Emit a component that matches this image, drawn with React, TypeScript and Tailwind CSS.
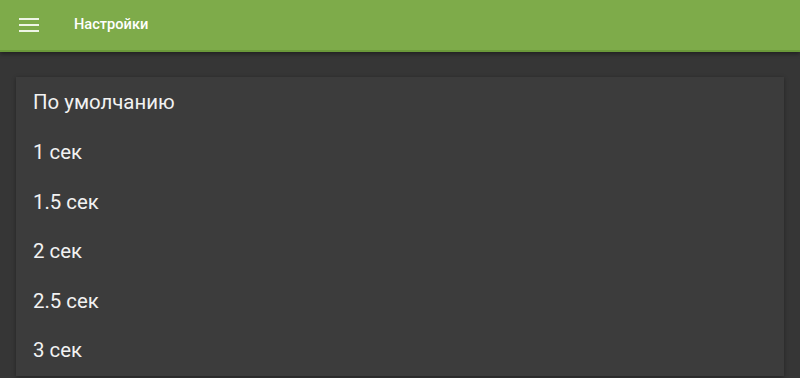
import React from "react";

const items = ["По умолчанию", "1 сек", "1.5 сек", "2 сек", "2.5 сек", "3 сек"];

export default function App() {
  return (
    <div className="w-[800px] h-[378px] overflow-hidden bg-[#363636] flex flex-col" style={{ fontFamily: "Roboto, 'Noto Sans', sans-serif" }}>
      <div className="h-[52px] shrink-0 bg-[#7eab4a] border-b-2 border-[#6b9a3a] flex items-center shadow-[0_2px_4px_rgba(0,0,0,0.4)] relative z-10">
        <div className="w-[20px] ml-[19px] flex flex-col gap-[4px]">
          <div className="h-[2px] bg-[#eef5e6]" />
          <div className="h-[2px] bg-[#eef5e6]" />
          <div className="h-[2px] bg-[#eef5e6]" />
        </div>
        <div className="ml-[35px] text-white text-[14.6px] font-medium">Настройки</div>
      </div>
      <div className="px-[16px] pt-[25px] flex-1">
        <div className="bg-[#3c3c3c] shadow-[0_1px_4px_rgba(0,0,0,0.35)] pt-[1px]">
          {items.map((t) => (
            <div key={t} className="h-[49.6px] flex items-center pl-[17px] text-[20.4px] text-[#f2f2f2]">
              {t}
            </div>
          ))}
        </div>
      </div>
    </div>
  );
}
